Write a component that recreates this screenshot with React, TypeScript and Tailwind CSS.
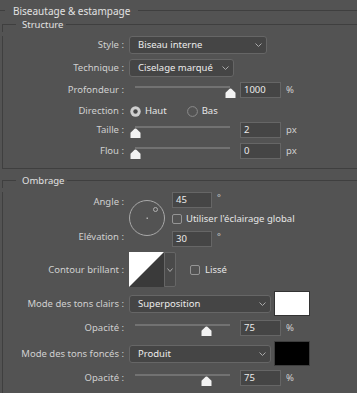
import type { ReactNode } from 'react';

const LINE = 'bg-[#3f3f3f]';

function Chevron({ w = 7 }: { w?: number }) {
  return (
    <svg width={w} height={4} viewBox={`0 0 ${w} 4`} className="shrink-0">
      <path d={`M0.5 0.5 L${w / 2} 3.5 L${w - 0.5} 0.5`} stroke="#a9a9a9" strokeWidth="1" fill="none" />
    </svg>
  );
}

function Label({ children, className = '' }: { children: ReactNode; className?: string }) {
  return <div className={`w-[121px] shrink-0 text-right text-[#d0d0d0] ${className}`}>{children}</div>;
}

function Select({ value, width }: { value: string; width: string }) {
  return (
    <div
      className={`ml-[5px] flex h-[18px] items-center rounded-[3px] border border-[#666666] bg-[#454545] pl-[8px] pr-[4px] text-[#ececec] ${width}`}
    >
      <span className="flex-1">{value}</span>
      <Chevron />
    </div>
  );
}

function NumInput({ value, width = 'w-[41px]' }: { value: string; width?: string }) {
  return (
    <div className={`flex h-[16px] items-center border border-[#666666] bg-[#454545] pl-[3px] text-[#ececec] ${width}`}>
      {value}
    </div>
  );
}

function Thumb({ left }: { left: number }) {
  return (
    <svg width={11} height={10} viewBox="0 0 11 10" className="absolute top-[6px]" style={{ left }}>
      <path d="M4.6 0.8 Q5.5 0 6.4 0.8 L10.5 4.8 V10 H0.5 V4.8 Z" fill="#f2f2f2" />
    </svg>
  );
}

function Slider({ value, unit, frac }: { value: string; unit: string; frac: number }) {
  return (
    <div className="ml-[5px] flex h-[16px] items-center">
      <div className="relative h-[16px] w-[107px]">
        <div className="absolute left-[6px] top-[4px] h-[2px] w-[95px] bg-[#727272]" />
        <Thumb left={6 + 95 * frac - 5.5} />
      </div>
      <div className="ml-[4px]">
        <NumInput value={value} />
      </div>
      <span className="ml-[5px] text-[#d0d0d0]">{unit}</span>
    </div>
  );
}

function Checkbox() {
  return <span className="h-[10px] w-[10px] shrink-0 rounded-[2px] border border-[#959595]" />;
}

function Radio({ checked }: { checked?: boolean }) {
  return (
    <svg width={11} height={11} viewBox="0 0 11 11" className="shrink-0">
      {checked ? (
        <>
          <circle cx="5.5" cy="5.5" r="5.2" fill="#cfcfcf" />
          <circle cx="5.5" cy="5.5" r="2.2" fill="#474747" />
        </>
      ) : (
        <circle cx="5.5" cy="5.5" r="4.9" stroke="#8c8c8c" strokeWidth="1" fill="none" />
      )}
    </svg>
  );
}

function GroupHeader({ title }: { title: string }) {
  return (
    <div className="flex h-[15px] items-center">
      <span className="h-[8px] w-[14px] self-end border-l border-t border-[#3f3f3f]" />
      <span className="pl-[6px] pr-[3px] text-[#e2e2e2]">{title}</span>
      <span className={`h-px flex-1 ${LINE}`} />
    </div>
  );
}

function Degree() {
  return <span className="ml-[5px] mt-[1px] self-start text-[9px] leading-none text-[#d0d0d0]">°</span>;
}

export default function App() {
  return (
    <div className="h-[393px] w-[357px] overflow-hidden bg-[#535353] font-['Noto_Sans','Liberation_Sans',sans-serif] text-[9.5px] leading-none">
      {/* Title */}
      <div className="flex h-[17px] items-center pt-[4px]">
        <span className={`h-px w-[5px] ${LINE}`} />
        <span className="px-[8px] text-[10px] text-[#e2e2e2]">Biseautage &amp; estampage</span>
        <span className={`h-px flex-1 ${LINE}`} />
      </div>

      {/* Structure */}
      <section className="ml-[2px] border-b border-[#3f3f3f]">
        <GroupHeader title="Structure" />
        <div className="border-l border-[#3f3f3f] pb-[9px]">
          <div className="mt-[4px] flex h-[18px] items-center">
            <Label>Style :</Label>
            <Select value="Biseau interne" width="w-[138px]" />
          </div>
          <div className="mt-[5px] flex h-[18px] items-center">
            <Label>Technique :</Label>
            <Select value="Ciselage marqué" width="w-[105px]" />
          </div>
          <div className="mt-[5px] flex h-[16px] items-center">
            <Label>Profondeur :</Label>
            <Slider value="1000" unit="%" frac={1} />
          </div>
          <div className="mt-[5px] flex h-[16px] items-center">
            <Label>Direction :</Label>
            <div className="ml-[6px] flex items-center gap-[4px] text-[#e6e6e6]">
              <Radio checked />
              <span>Haut</span>
              <span className="ml-[16px] flex items-center gap-[4px]">
                <Radio />
                <span>Bas</span>
              </span>
            </div>
          </div>
          <div className="mt-[3px] flex h-[16px] items-center">
            <Label>Taille :</Label>
            <Slider value="2" unit="px" frac={0} />
          </div>
          <div className="mt-[5px] flex h-[16px] items-center">
            <Label>Flou :</Label>
            <Slider value="0" unit="px" frac={0} />
          </div>
        </div>
      </section>

      {/* Ombrage */}
      <section className="ml-[2px] mt-[4px]">
        <GroupHeader title="Ombrage" />
        <div className="h-[220px] border-l border-[#3f3f3f]">
          <div className="mt-[4px] flex">
            <div className="flex w-[121px] shrink-0 flex-col">
              <Label className="mt-[2px] flex h-[16px] items-center justify-end">Angle :</Label>
              <Label className="mt-[19px] flex h-[16px] items-center justify-end">Elévation :</Label>
            </div>
            <svg width={36} height={36} viewBox="0 0 36 36" className="ml-[5px] mt-[8px] shrink-0">
              <circle cx="18" cy="18" r="17.5" stroke="#a8a8a8" strokeWidth="1" fill="none" />
              <rect x="17.5" y="17.5" width="1.5" height="1.5" fill="#b0b0b0" />
              <circle cx="26.5" cy="9.5" r="2" stroke="#b0b0b0" strokeWidth="1" fill="none" />
            </svg>
            <div className="ml-[7px] flex flex-col">
              <div className="flex h-[16px] items-center">
                <NumInput value="45" width="w-[40px]" />
                <Degree />
              </div>
              <div className="mt-[4px] flex h-[14px] items-center">
                <Checkbox />
                <span className="ml-[4px] text-[#e6e6e6]">Utiliser l'éclairage global</span>
              </div>
              <div className="mt-[5px] flex h-[16px] items-center">
                <NumInput value="30" width="w-[40px]" />
                <Degree />
              </div>
            </div>
          </div>

          <div className="mt-[5px] flex h-[35px] items-center">
            <Label>Contour brillant :</Label>
            <div className="ml-[5px] flex h-[35px]">
              <svg width={35} height={35} viewBox="0 0 35 35" className="shrink-0">
                <rect width="35" height="35" fill="#3a3a3a" />
                <polygon points="0,0 35,0 0,35" fill="#ffffff" />
              </svg>
              <div className="flex w-[12px] items-center justify-center rounded-r-[2px] border border-[#666666] bg-[#4a4a4a]">
                <Chevron w={6} />
              </div>
            </div>
            <span className="ml-[14px] flex items-center">
              <Checkbox />
              <span className="ml-[5px] text-[#e6e6e6]">Lissé</span>
            </span>
          </div>

          <div className="mt-[4px] flex h-[25px] items-center">
            <Label>Mode des tons clairs :</Label>
            <Select value="Superposition" width="w-[142px]" />
            <span className="ml-[3px] h-[25px] w-[36px] border border-[#333333] bg-white" />
          </div>
          <div className="mt-[4px] flex h-[16px] items-center">
            <Label>Opacité :</Label>
            <Slider value="75" unit="%" frac={0.75} />
          </div>
          <div className="mt-[5px] flex h-[25px] items-center">
            <Label>Mode des tons foncés :</Label>
            <Select value="Produit" width="w-[142px]" />
            <span className="ml-[3px] h-[25px] w-[36px] border border-[#3d3d3d] bg-black" />
          </div>
          <div className="mt-[4px] flex h-[16px] items-center">
            <Label>Opacité :</Label>
            <Slider value="75" unit="%" frac={0.75} />
          </div>
        </div>
      </section>
    </div>
  );
}
